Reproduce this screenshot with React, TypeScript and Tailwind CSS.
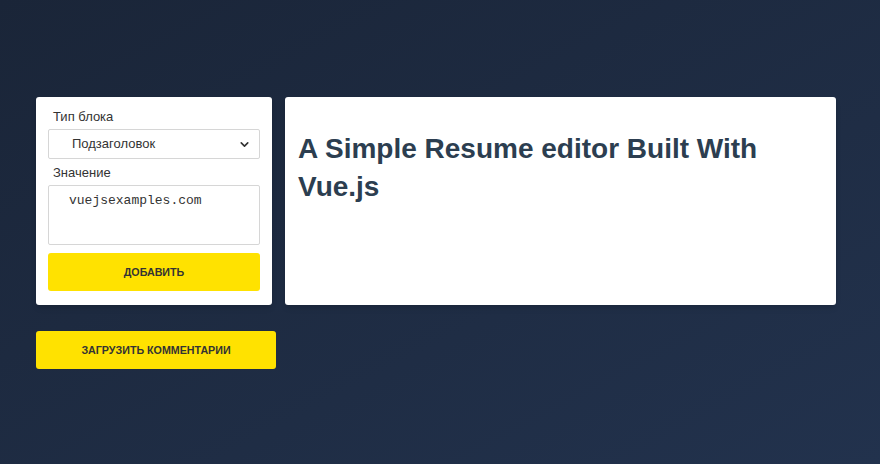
import { ChevronDown } from 'lucide-react';

const App: React.FC = () => {
    return (
        <div className="min-h-screen w-full bg-gradient-to-br from-[#1a2538] to-[#22324d] px-9 pt-[97px] font-['Liberation_Sans',Arial,sans-serif]">
            <div className="flex items-start gap-[13px]">
                <div className="w-[236px] h-[208px] bg-white rounded-[3px] px-3 pt-[12px] shadow-md">
                    <label className="block pl-[5px] text-[13px] leading-4 text-[#333]">Тип блока</label>
                    <div className="relative mt-[4px]">
                        <select
                            defaultValue="sub"
                            className="w-full h-[30px] appearance-none rounded-[2px] border border-[#d6d6d6] bg-white pl-[23px] text-[13px] text-[#333] outline-none"
                        >
                            <option value="sub">Подзаголовок</option>
                        </select>
                        <ChevronDown className="pointer-events-none absolute right-[9px] top-[9px] h-[13px] w-[13px] text-[#333]" strokeWidth={3} />
                    </div>
                    <label className="mt-[6px] block pl-[5px] text-[13px] leading-4 text-[#333]">Значение</label>
                    <textarea
                        defaultValue="vuejsexamples.com"
                        className="mt-[4px] block h-[60px] w-full resize-none rounded-[2px] border border-[#d6d6d6] px-5 pt-[5px] font-['Liberation_Mono',monospace] text-[13px] text-[#333] outline-none"
                    />
                    <button className="mt-2 h-[38px] w-full rounded-[3px] bg-[#ffe200] text-[10.7px] font-bold uppercase text-[#333]">
                        Добавить
                    </button>
                </div>
                <div className="w-[551px] h-[208px] bg-white rounded-[3px] px-[13px] pt-[33px] shadow-md">
                    <h1 className="text-[28px] font-bold leading-[38px] text-[#2c3e50]">
                        A Simple Resume editor Built With Vue.js
                    </h1>
                </div>
            </div>
            <button className="mt-[26px] h-[38px] w-[240px] rounded-[3px] bg-[#ffe200] text-[10.7px] font-bold uppercase text-[#333]">
                Загрузить комментарии
            </button>
        </div>
    );
};

export default App;
